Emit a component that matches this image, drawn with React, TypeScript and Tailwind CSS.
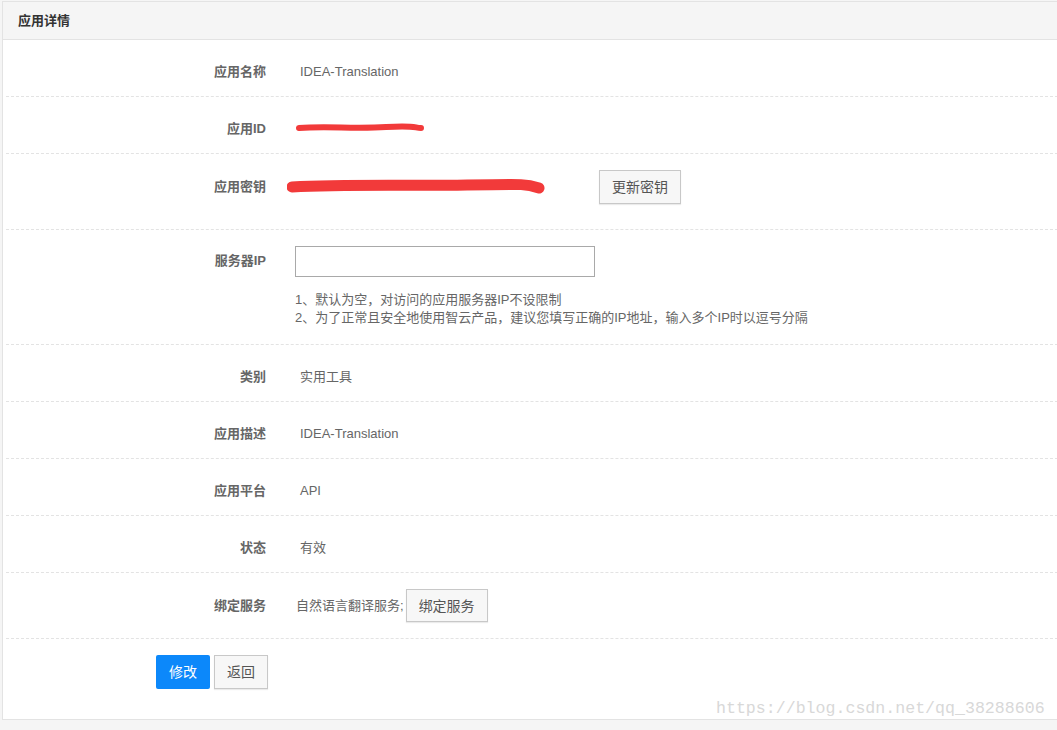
import React from "react";

const font = { fontFamily: '"Liberation Sans", Arial, "Noto Sans CJK SC", sans-serif' };

function Row({
  label,
  children,
  className,
  labelClass,
}: {
  label: string;
  children: React.ReactNode;
  className: string;
  labelClass?: string;
}) {
  return (
    <div className={"flex border-b border-dashed border-[#e3e3e3] mx-[3px] " + className}>
      <div className={"w-[260px] shrink-0 text-right text-[13px] font-bold text-[#666] leading-[18px] " + (labelClass ?? "")}>
        {label}
      </div>
      <div className="ml-[29px] flex-1 text-[13px] text-[#666] leading-[18px]">{children}</div>
    </div>
  );
}

export default function App() {
  return (
    <div className="relative w-[1057px] h-[730px] overflow-hidden bg-[#f5f5f5]" style={font}>
      <div className="ml-[2px] mt-[1px] w-[1070px] border border-[#e3e3e3] bg-white">
        <div className="h-[38px] bg-[#f5f5f5] border-b border-[#e3e3e3] px-[15px] flex items-center text-[13px] font-bold text-[#333]">
          应用详情
        </div>
        <Row label="应用名称" className="pt-[23px] pb-[15px]">
          <span className="pl-[5px]">IDEA-Translation</span>
        </Row>
        <Row label="应用ID" className="pt-[23px] pb-[15px]">
          <svg width="140" height="18" className="ml-[1px]">
            <path d="M3 8 C30 6, 60 9, 90 7 S118 8, 125 8" stroke="#f23a3a" strokeWidth="6" fill="none" strokeLinecap="round" />
          </svg>
        </Row>
        <Row label="应用密钥" className="pt-[16px] pb-[25px] items-center">
          <div className="flex items-center">
            <svg width="300" height="24" className="-ml-[8px]">
              <path d="M5 12 C60 9, 120 11, 180 10 S240 9, 252 13" stroke="#f23a3a" strokeWidth="11" fill="none" strokeLinecap="round" />
            </svg>
            <button className="ml-[12px] h-[34px] w-[82px] border border-[#c8c8c8] bg-[#f7f7f7] text-[14px] text-[#555] shadow-[0_1px_1px_rgba(0,0,0,0.08)]">
              更新密钥
            </button>
          </div>
        </Row>
        <Row label="服务器IP" className="pt-[16px] pb-[17px]" labelClass="pt-[6px]">
          <div className="w-[300px] h-[31px] border border-[#a9a9a9] bg-white" />
          <div className="mt-[14px] text-[13px] leading-[18px] text-[#666]">
            <div>1、默认为空，对访问的应用服务器IP不设限制</div>
            <div>2、为了正常且安全地使用智云产品，建议您填写正确的IP地址，输入多个IP时以逗号分隔</div>
          </div>
        </Row>
        <Row label="类别" className="pt-[23px] pb-[15px]">
          <span className="pl-[5px]">实用工具</span>
        </Row>
        <Row label="应用描述" className="pt-[23px] pb-[15px]">
          <span className="pl-[5px]">IDEA-Translation</span>
        </Row>
        <Row label="应用平台" className="pt-[23px] pb-[15px]">
          <span className="pl-[5px]">API</span>
        </Row>
        <Row label="状态" className="pt-[23px] pb-[15px]">
          <span className="pl-[5px]">有效</span>
        </Row>
        <Row label="绑定服务" className="pt-[16px] pb-[16px] items-center">
          <div className="flex items-center">
            <span className="pl-[1px]">自然语言翻译服务;</span>
            <button className="ml-[2px] h-[33px] w-[82px] border border-[#c8c8c8] bg-[#f7f7f7] text-[14px] text-[#555] shadow-[0_1px_1px_rgba(0,0,0,0.08)]">
              绑定服务
            </button>
          </div>
        </Row>
        <div className="flex gap-[4px] pl-[153px] pt-[16px] pb-[30px]">
          <button className="h-[34px] w-[54px] rounded-[2px] bg-[#0c88fa] text-[14px] text-white">修改</button>
          <button className="h-[34px] w-[54px] border border-[#c8c8c8] bg-[#f7f7f7] text-[14px] text-[#555] shadow-[0_1px_1px_rgba(0,0,0,0.08)]">
            返回
          </button>
        </div>
      </div>
      <div
        className="absolute left-[716px] top-[698px] text-[16.6px] leading-[22px] text-[#d8d8d8]"
        style={{ fontFamily: '"Liberation Mono", "Courier New", monospace' }}
      >
        https://blog.csdn.net/qq_38288606
      </div>
    </div>
  );
}
